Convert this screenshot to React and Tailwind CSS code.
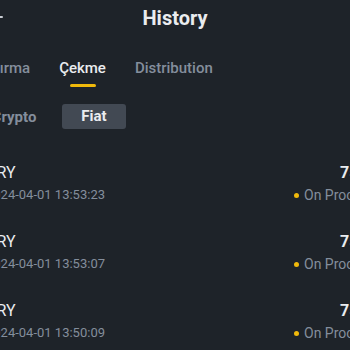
import React from 'react';

const rows = [
  { date: '2024-04-01 13:53:23' },
  { date: '2024-04-01 13:53:07' },
  { date: '2024-04-01 13:50:09' },
];

export default function App() {
  return (
    <div className="w-[350px] h-[350px] overflow-hidden bg-[#1e2329] font-['Roboto',sans-serif] relative">
      {/* header */}
      <div className="h-[36px] flex items-center justify-center relative">
        <div className="absolute left-[-14px] top-[16px] w-[17px] h-[2px] bg-[#c8ccd2] rounded-sm" />
        <h1 className="text-[20px] font-bold text-[#eaecef] leading-none">History</h1>
      </div>

      {/* tabs */}
      <div className="flex gap-[29px] ml-[-22px] mt-[21px] text-[15px] font-medium leading-none">
        <span className="text-[#848e9c] pt-[4px]">Yatırma</span>
        <div className="flex flex-col items-center">
          <span className="text-[#eaecef] pt-[4px]">Çekme</span>
          <span className="mt-[8px] w-[26px] h-[3px] rounded-full bg-[#f0b90b]" />
        </div>
        <span className="text-[#848e9c] pt-[4px]">Distribution</span>
      </div>

      {/* segment */}
      <div className="flex items-center gap-[16px] ml-[-18px] mt-[17px] text-[15px] font-bold">
        <div className="w-[64px] h-[25px] flex items-center justify-center text-[#848e9c] pt-[2px]">Crypto</div>
        <div className="w-[64px] h-[25px] flex items-center justify-center rounded-[3px] bg-[#424953] text-[#eaecef]">Fiat</div>
      </div>

      {/* list */}
      <div className="mt-[34px] flex flex-col gap-[29px]">
        {rows.map((r, i) => (
          <div key={i} className="flex justify-between">
            <div className="flex flex-col ml-[-14px]">
              <span className="text-[16px] text-[#eaecef] leading-[19px] ml-[1px]">TRY</span>
              <span className="text-[13px] text-[#848e9c] leading-[16px] mt-[5px]">{r.date}</span>
            </div>
            <div className="flex flex-col items-start w-[56px] shrink-0">
              <span className="text-[16px] font-bold text-[#eaecef] leading-[19px] pl-[46px] whitespace-nowrap">750.00 TRY</span>
              <span className="flex items-center gap-[5px] text-[14px] text-[#848e9c] leading-[16px] mt-[5px] whitespace-nowrap">
                <span className="w-[5px] h-[5px] rounded-full bg-[#f0b90b] shrink-0" />
                On Process
              </span>
            </div>
          </div>
        ))}
      </div>
    </div>
  );
}
